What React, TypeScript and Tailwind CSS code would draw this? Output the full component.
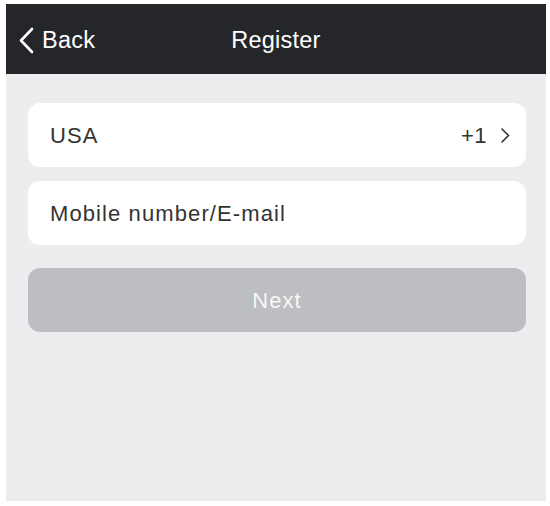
export default function App() {
  return (
    <div className="w-[550px] h-[506px] bg-white pl-[6px] pr-[4px] pt-[4px] font-['Liberation_Sans',Arial,sans-serif]">
      <div className="h-[497px] bg-[#ededef] flex flex-col">
        {/* Header */}
        <div className="relative h-[70px] bg-[#252629] flex items-center justify-center shrink-0">
          <div className="absolute left-[12px] top-0 h-full flex items-center gap-[8px] pt-[3px]">
            <svg width="16" height="27" viewBox="0 0 16 27" fill="none">
              <path d="M14 2 L3 13.5 L14 25" stroke="#ffffff" strokeWidth="2.6" strokeLinecap="round" strokeLinejoin="round" />
            </svg>
            <span className="text-white text-[23.5px] tracking-[0.01em]">Back</span>
          </div>
          <span className="text-white text-[23.5px] tracking-[0.01em] pt-[3px]">Register</span>
        </div>

        {/* Form */}
        <div className="flex flex-col gap-[14px] pl-[22px] pr-[20px] pt-[29px]">
          <div className="h-[64px] bg-white rounded-[12px] flex items-center justify-between pl-[22px] pr-[16px]">
            <span className="text-[22px] text-[#333333] tracking-[0.05em]">USA</span>
            <div className="flex items-center gap-[13px]">
              <span className="text-[22px] text-[#333333] tracking-[0.02em]">+1</span>
              <svg width="10" height="15" viewBox="0 0 10 15" fill="none">
                <path d="M2 1 L8.5 7.5 L2 14" stroke="#333333" strokeWidth="1.6" strokeLinecap="round" strokeLinejoin="round" />
              </svg>
            </div>
          </div>
          <div className="h-[64px] bg-white rounded-[12px] flex items-center pl-[22px] pr-[16px]">
            <span className="text-[22px] text-[#333333] tracking-[0.05em]">Mobile number/E-mail</span>
          </div>
          <div className="h-[64px] mt-[9px] bg-[#bdbec1] rounded-[12px] flex items-center justify-center">
            <span className="text-[22px] text-[#f7f7f7] tracking-[0.05em]">Next</span>
          </div>
        </div>
      </div>
    </div>
  );
}
